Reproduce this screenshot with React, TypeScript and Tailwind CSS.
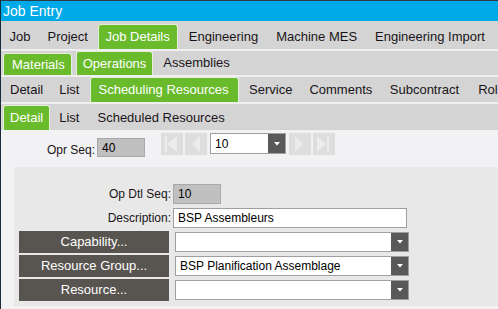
import type { ReactNode } from "react";

type TabProps = {
  label: string;
  active?: boolean;
  className?: string;
};

// one tab of a tab strip; the green one is the selected page
const Tab = ({ label, active, className = "" }: TabProps) => {
  if (active) {
    return (
      <div
        className={`flex items-center bg-[#6abb2c] text-white border border-b-0 border-[#e4f0dc] rounded-t-[3px] ${className}`}
      >
        {label}
      </div>
    );
  }
  return <div className={`flex items-center h-[25px] text-[#1a1418] ${className}`}>{label}</div>;
};

const Sep = () => <div className="h-[2px] bg-[#efefef]" />;

const NavButton = ({ children }: { children: ReactNode }) => (
  <div className="w-[22px] h-[22px] bg-[#dedede]">
    <svg width="22" height="22" viewBox="0 0 22 22">
      <g fill="#ececec">{children}</g>
    </svg>
  </div>
);

const DropArrow = () => (
  <div className="w-[17px] h-full bg-[#595959] flex items-center justify-center">
    <svg width="6" height="4" viewBox="0 0 6 4">
      <polygon points="0,0 6,0 3,3.5" fill="#ffffff" />
    </svg>
  </div>
);

const Combo = ({ value, className = "" }: { value?: string; className?: string }) => (
  <div className={`h-[20px] flex border border-[#9f9f9f] bg-white ${className}`}>
    <div className="flex-1 pl-[4px] flex items-center text-[12px] text-black">{value}</div>
    <DropArrow />
  </div>
);

const ReadOnly = ({ value, className = "" }: { value: string; className?: string }) => (
  <div
    className={`w-[48px] flex items-center pl-[4px] bg-[#c0c0c0] border border-[#a9a9a9] text-[12px] text-black ${className}`}
  >
    {value}
  </div>
);

const Label = ({ text }: { text: string }) => (
  <div className="w-[159px] pr-[2px] text-right text-[12px] text-[#1a1418]">{text}</div>
);

const LinkButton = ({ text }: { text: string }) => (
  <div className="w-[161px] pl-[5px]">
    <div className="w-[150px] h-[22px] bg-[#585450] text-white text-[13px] flex items-center justify-center">
      {text}
    </div>
  </div>
);

export default function App() {
  return (
    <div className="w-[498px] h-[309px] overflow-hidden border-l border-[#1c2a38] bg-[#f2f2f4] font-['Liberation_Sans',Arial,sans-serif] text-[13px] whitespace-nowrap">
      {/* title bar */}
      <div className="h-[21px] border-t border-[#2e3b44] bg-[#00a9e7] text-white text-[14px] pl-[2px] flex items-center">
        Job Entry
      </div>

      {/* tab strips */}
      <div className="bg-[#d4d4d4] overflow-hidden">
        <div className="h-[28px] flex items-end">
          <Tab label="Job" className="px-[8.5px]" />
          <Tab label="Project" className="px-[8.5px]" />
          <Tab label="Job Details" active className="h-[25px] mx-[2px] pl-[6px] pr-[7px]" />
          <Tab label="Engineering" className="px-[9px]" />
          <Tab label="Machine MES" className="px-[9px]" />
          <Tab label="Engineering Import" className="px-[9px]" />
        </div>
        <Sep />
        <div className="h-[24px] flex items-end">
          <Tab label="Materials" active className="h-[22px] ml-[2px] pl-[8px] pr-[6px]" />
          <Tab label="Operations" active className="h-[24px] ml-[4px] pl-[6px] pr-[6px]" />
          <Tab label="Assemblies" className="h-[24px] pl-[10px] pr-[9px]" />
        </div>
        <Sep />
        <div className="h-[25px] flex items-end">
          <Tab label="Detail" className="pl-[9px] pr-[8px]" />
          <Tab label="List" className="px-[8px]" />
          <Tab label="Scheduling Resources" active className="h-[25px] ml-[3px] pl-[7px] pr-[9px]" />
          <Tab label="Service" className="ml-[2px] px-[8.5px]" />
          <Tab label="Comments" className="px-[8.5px]" />
          <Tab label="Subcontract" className="px-[9px]" />
          <Tab label="Rol" className="px-[10px]" />
        </div>
        <Sep />
        <div className="h-[26px] flex items-end">
          <Tab label="Detail" active className="h-[25px] ml-[2px] px-[6px]" />
          <Tab label="List" className="px-[9px]" />
          <Tab label="Scheduled Resources" className="px-[9px]" />
        </div>
      </div>

      {/* sequence + navigator */}
      <div className="pt-[3px] flex items-start">
        <div className="w-[94px] mt-[8px] text-right text-[12px] text-[#1a1418]">Opr Seq:</div>
        <ReadOnly value="40" className="ml-[2px] mt-[5px] h-[19px]" />
        <div className="ml-[16px] flex items-start">
          <NavButton>
            <rect x="4" y="3" width="2" height="16" />
            <polygon points="16,3 6,11 16,19" />
          </NavButton>
          <div className="ml-[2px]">
            <NavButton>
              <polygon points="15,3 7,11 15,19" />
            </NavButton>
          </div>
          <Combo value="10" className="ml-[3px] w-[76px] h-[21px]" />
          <div className="ml-[3px]">
            <NavButton>
              <polygon points="6,3 14,11 6,19" />
            </NavButton>
          </div>
          <div className="ml-[2px]">
            <NavButton>
              <polygon points="4,3 13,11 4,19" />
              <rect x="14" y="3" width="2" height="16" />
            </NavButton>
          </div>
        </div>
      </div>

      {/* detail panel */}
      <div className="ml-[13px] mt-[8px] bg-[#e8e8e8] rounded-tl-[3px] pt-[15px] pb-[4px]">
        <div className="h-[24px] flex items-center">
          <Label text="Op Dtl Seq:" />
          <ReadOnly value="10" className="h-[20px]" />
        </div>
        <div className="h-[24px] flex items-center">
          <Label text="Description:" />
          <div className="w-[234px] h-[20px] flex items-center pl-[4px] bg-white border border-[#9f9f9f] text-[12px] text-black">
            BSP Assembleurs
          </div>
        </div>
        <div className="h-[24px] flex items-center">
          <LinkButton text="Capability..." />
          <Combo className="w-[234px]" />
        </div>
        <div className="h-[24px] flex items-center">
          <LinkButton text="Resource Group..." />
          <Combo value="BSP Planification Assemblage" className="w-[234px]" />
        </div>
        <div className="h-[24px] flex items-center">
          <LinkButton text="Resource..." />
          <Combo className="w-[234px]" />
        </div>
      </div>
      <div className="ml-[15px] mt-[4px] h-[10px] bg-[#e8e8e8]" />
    </div>
  );
}
